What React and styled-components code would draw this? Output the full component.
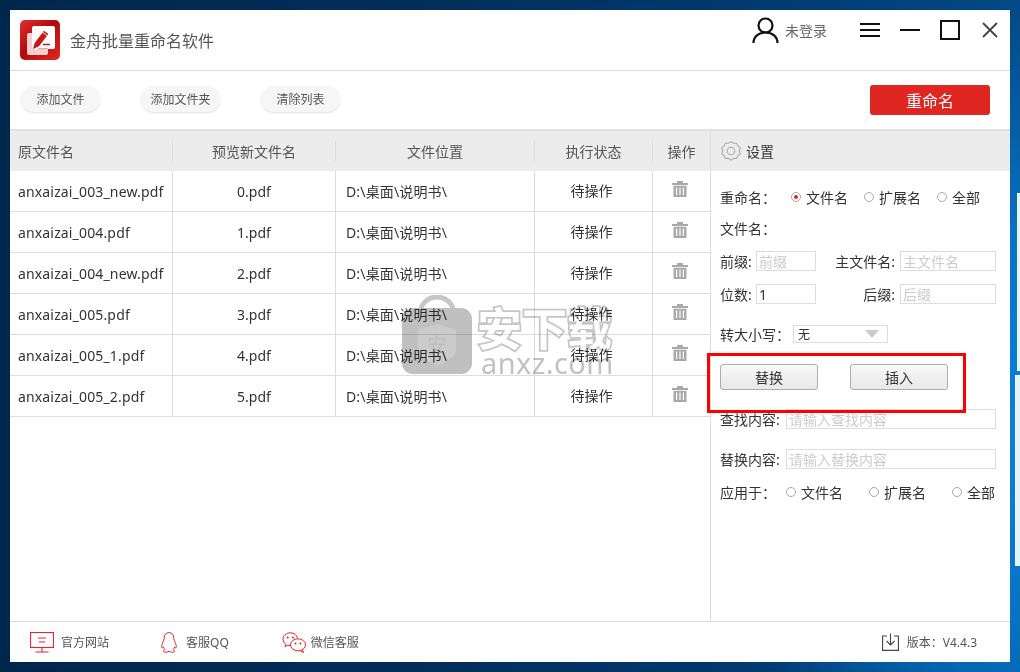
import React from "react";
import styled, { createGlobalStyle } from "styled-components";

const Global = createGlobalStyle`
  html, body { margin: 0; padding: 0; width: 1020px; height: 672px; overflow: hidden; }
  body { font-family: "Noto Sans", "Noto Sans CJK SC", sans-serif; }
  * { box-sizing: border-box; }
`;
const Desktop = styled.div`
  position: relative; width: 1020px; height: 672px; padding: 10px;
  background:
    radial-gradient(ellipse 300px 420px at 1020px 430px, #0a80da 0%, rgba(10,128,218,.75) 45%, rgba(10,128,218,0) 100%),
    linear-gradient(90deg, #01264c 0%, #012e58 40%, #013a70 75%, #024a86 100%);
`;
const BehindPane = styled.div`
  position: absolute; right: 0; top: ${p => p.$top}px; width: ${p => p.$w}px; height: ${p => p.$h}px;
  background: #dff4fb; border: 1px solid #f2fbff; border-right: none;
`;
const Win = styled.div`
  position: relative; width: 1000px; height: 652px; background: #fff; display: flex; flex-direction: column;
  font-size: 14px; color: #333;
`;
const TitleBar = styled.div`
  height: 61px; flex: none; display: flex; align-items: center; padding: 0 10px; border-bottom: 1px solid #ddd;
`;
const Title = styled.div`
  margin-left: 10px; font-size: 16px; color: #555;
`;
const UserBlock = styled.div`
  margin-left: auto; display: flex; align-items: center; gap: 6px; color: #666; font-size: 14px; margin-bottom: 20px;
`;
const WinControls = styled.div`
  display: flex; align-items: center; margin-left: 33px; margin-right: -1px; margin-bottom: 20px;
`;
const Ctrl = styled.svg`
  display: block; flex: none; margin-right: ${p => p.$gap}px;
`;
const Toolbar = styled.div`
  height: 60px; flex: none; display: flex; align-items: center; padding: 0 20px 3px 11px; gap: 41px; border-bottom: 2px solid #e2e2e2;
`;
const PillBtn = styled.div`
  width: 79px; height: 26px; border-radius: 13px; background: #f6f6f6; color: #555; font-size: 12px;
  display: flex; align-items: center; justify-content: center; box-shadow: 0 1px 2px rgba(0,0,0,.12);
`;
const RenameBtn = styled.div`
  margin-left: auto; width: 120px; height: 30px; margin-top: 3px; border-radius: 3px; background: #e02620; color: #fff;
  font-size: 16px; display: flex; align-items: center; justify-content: center;
`;
const Main = styled.div`
  flex: 1; min-height: 0; display: flex;
`;
const TablePane = styled.div`
  width: 700px; flex: none; display: flex; flex-direction: column;
`;
const HeadRow = styled.div`
  height: 40px; flex: none; background: #ececec; display: grid; grid-template-columns: 163px 163px 199px 118px 57px; align-items: center;
  color: #555; font-size: 14px;
`;
const HeadCell = styled.div`
  height: 20px; line-height: 22px; border-right: ${p => p.$last ? "none" : "1px solid #ddd"};
  text-align: ${p => p.$left ? "left" : "center"}; padding-left: ${p => p.$left ? 8 : 0}px;
`;
const Row = styled.div`
  height: 41px; flex: none; display: grid; grid-template-columns: 163px 163px 199px 118px 57px; border-bottom: 1px solid #ddd;
  font-size: 14px; color: #333;
`;
const Cell = styled.div`
  display: flex; align-items: center; justify-content: ${p => p.$left ? "flex-start" : "center"};
  padding-left: ${p => p.$pad || 0}px; padding-bottom: ${p => p.$lift || 0}px; padding-right: ${p => p.$pr || 0}px;
  border-right: ${p => p.$last ? "none" : "1px solid #ddd"};
  white-space: nowrap; letter-spacing: ${p => p.$left ? ".15px" : "0"};
`;
const TrashSlot = styled.div`
  display: flex; margin: 0 4px 4px 0;
`;
const Side = styled.div`
  flex: 1; border-left: 1px solid #ddd; display: flex; flex-direction: column; color: #333; font-size: 14px;
`;
const SideHead = styled.div`
  height: 40px; flex: none; background: #ececec; display: flex; align-items: center; padding-left: 10px; gap: 5px; color: #333;
`;
const SideBody = styled.div`
  padding: 16px 14px 0 9px; display: flex; flex-direction: column;
`;
const Line = styled.div`
  display: flex; align-items: center; height: ${p => p.$h || 20}px; margin-bottom: ${p => p.$mb || 0}px; white-space: nowrap;
`;
const Label = styled.span`
  flex: none; width: ${p => p.$w ? `${p.$w}px` : "auto"}; text-align: ${p => p.$right ? "right" : "left"};
  padding-right: ${p => p.$right ? 5 : 0}px;
`;
const Radio = styled.span`
  flex: none; width: 10px; height: 10px; border-radius: 50%; border: 1px solid #aaa; background: #fff; margin-left: ${p => p.$ml}px; margin-right: 5px;
  display: flex; align-items: center; justify-content: center;
  &::after { content: ""; display: ${p => p.$on ? "block" : "none"}; width: 4px; height: 4px; border-radius: 50%; background: #e02620; }
`;
const Field = styled.div`
  flex: none; width: ${p => p.$w}px; height: 20px; border: 1px solid #ddd; padding-left: 2px;
  display: flex; align-items: center; color: ${p => p.$val ? "#333" : "#ccc"}; font-size: 14px; overflow: hidden; white-space: nowrap;
`;
const SelectBox = styled.div`
  flex: none; width: 95px; height: 18px; border: 1px solid #ddd; margin-left: 3px; padding-left: 4px; display: flex; align-items: center; justify-content: space-between; font-size: 12px;
`;
const Arrow = styled.span`
  width: 0; height: 0; margin-right: 8px; border-left: 7px solid transparent; border-right: 7px solid transparent; border-top: 8px solid #ccc;
`;
const GrayBtn = styled.div`
  width: 98px; height: 26px; border: 1px solid #adadad; border-radius: 3px; background: linear-gradient(#f8f8f8, #e8e8e8);
  display: flex; align-items: center; justify-content: center; font-size: 14px; color: #333; margin-right: ${p => p.$mr || 0}px;
`;
const Footer = styled.div`
  height: 41px; flex: none; border-top: 1px solid #ddd; display: flex; align-items: center; padding: 0 33px 0 20px; font-size: 12px; color: #555;
`;
const FootItem = styled.div`
  display: flex; align-items: center; gap: ${p => p.$gap}px; margin-right: ${p => p.$mr}px;
`;
const Version = styled.div`
  margin-left: auto; display: flex; align-items: center; gap: 8px;
`;
const Highlight = styled.div`
  position: absolute; left: 697px; top: 343px; width: 259px; height: 60px; border: 3px solid #f00; pointer-events: none;
`;
const Watermark = styled.div`
  position: absolute; left: 392px; top: 285px; display: flex; pointer-events: none; mix-blend-mode: multiply;
`;
const WmText = styled.div`
  margin-left: 5px; display: flex; flex-direction: column;
`;
const WmCn = styled.div`
  font-size: 45px; line-height: 48px; font-weight: 700; color: #fff; -webkit-text-stroke: 3.5px #c6c6c6; paint-order: stroke fill;
  white-space: nowrap; margin-top: 10px;
`;
const WmEn = styled.div`
  font-size: 29px; line-height: 30px; color: #c2c2c2; margin-top: -5px; margin-left: 4px; letter-spacing: .4px;
`;

const Logo = () => (
  <svg width="40" height="40" viewBox="0 0 40 40">
    <defs>
      <linearGradient id="lg" x1="0" y1="0" x2="1" y2="1">
        <stop offset="0" stopColor="#e03030" /><stop offset=".45" stopColor="#b30a0e" /><stop offset="1" stopColor="#dc2a22" />
      </linearGradient>
    </defs>
    <rect width="40" height="40" rx="5" fill="url(#lg)" />
    <rect x="7" y="13" width="21" height="22" rx="2" fill="#f3cfcf" />
    <rect x="12" y="6" width="23" height="23" rx="2" fill="#fff" />
    <path d="M13 29l1.600-6L24 10.800l4.400 3.300L19 26.200z" fill="#c8181a" />
    <path d="M22.800 12.400l4.400 3.300" stroke="#fff" strokeWidth="1" />
    <path d="M23 24.500h7" stroke="#c8181a" strokeWidth="1.500" />
    <path d="M18 28.600h10" stroke="#d9a0a0" strokeWidth="1" />
  </svg>
);
const User = () => (
  <svg width="27" height="26" viewBox="0 0 27 26" fill="none" stroke="#111" strokeWidth="2.200">
    <circle cx="13.500" cy="8.500" r="7" />
    <path d="M1.500 26c0-6.500 5-10.500 12-10.500s12 4 12 10.500" />
  </svg>
);
const Trash = () => (
  <svg width="16" height="16" viewBox="0 0 16 16" fill="#a9a9a9">
    <path d="M0 2h16v2H0zM5 0h6v2H5z" />
    <path d="M1.500 4.800h13V16h-13zM4 6.500v7.500h1.200V6.500zM7.400 6.500v7.500h1.200V6.500zM10.800 6.500v7.500H12V6.500z" fillRule="evenodd" />
  </svg>
);
const Gear = () => (
  <svg width="20" height="20" viewBox="0 0 20 20" fill="none" stroke="#aaa" strokeWidth="1.100">
    <path d="M10 .8l2.600 1.500 3-.1 1.300 2.700 2.300 2-.8 3 .8 3-2.300 1.900-1.300 2.700-3-.1L10 19.200l-2.600-1.800-3 .1-1.300-2.700-2.300-1.900.8-3-.8-3 2.300-2 1.300-2.700 3 .1z" />
    <circle cx="10" cy="10" r="3.700" />
  </svg>
);
const Monitor = () => (
  <svg width="24" height="21" viewBox="0 0 24 21" fill="none" stroke="#e2262a" strokeWidth="1.100">
    <rect x=".5" y=".5" width="23" height="15" />
    <path d="M12 16v3.500M5.500 20h13M8 6h8M9 10h6" />
  </svg>
);
const QQ = () => (
  <svg width="16" height="21" viewBox="0 0 16 21" fill="none" stroke="#e2262a" strokeWidth="1">
    <path d="M8 .6c-3 0-4.700 2.200-4.700 5 0 1-.1 1.800-.5 2.600C1.700 10.400.6 13 .7 15c.1 1.200.8 1 1.800 0 .2 1 .7 2 1.500 2.600-1 .5-1.800 1.200-1.500 2 .4.900 3.800.9 5.500-.4 1.700 1.300 5.100 1.300 5.500.4.300-.8-.5-1.500-1.500-2 .8-.6 1.300-1.600 1.500-2.600 1 1 1.700 1.200 1.800 0 .1-2-1-4.600-2.100-6.800-.4-.8-.5-1.600-.5-2.600 0-2.800-1.700-5-4.700-5z" />
  </svg>
);
const WeChat = () => (
  <svg width="24" height="21" viewBox="0 0 24 21" fill="none" stroke="#e2262a" strokeWidth="1">
    <path d="M15.500 6C14.800 3 12 .8 8.500.8 4.300.8 1 3.600 1 7.200c0 2 1.100 3.800 2.800 5L3 14.600l2.800-1.400c.8.200 1.600.3 2.500.3" />
    <ellipse cx="16" cy="12.800" rx="7.500" ry="6" />
    <path d="M20.500 18l1 2.500-3.200-1.500" />
    <circle cx="5.800" cy="5.500" r="1" fill="#e2262a" stroke="none" /><circle cx="11" cy="5.500" r="1" fill="#e2262a" stroke="none" />
    <circle cx="13.500" cy="11.500" r="1" fill="#e2262a" stroke="none" /><circle cx="18.500" cy="11.500" r="1" fill="#e2262a" stroke="none" />
  </svg>
);
const Download = () => (
  <svg width="17" height="18" viewBox="0 0 17 18" fill="none" stroke="#444" strokeWidth="1.100">
    <path d="M5 3H.6v14.400h15.800V3H12M8.500 .5v11M4.500 8l4 4 4-4" />
  </svg>
);
const Lock = () => (
  <svg width="70" height="80" viewBox="0 0 70 80" style={{ flex: "none" }}>
    <path d="M18 20c0-24 34-24 34 0" fill="none" stroke="#c6c6c6" strokeWidth="5" />
    <rect x="0" y="13" width="70" height="66" rx="11" fill="#c0c0c0" />
    <path d="M35 29l19 6v19c0 8-10 13-19 17-9-4-19-9-19-17V35z" fill="#cbcbcb" />
    <text x="35" y="58" textAnchor="middle" fontSize="20" fill="#bdbdbd" fontFamily="Noto Sans CJK SC, sans-serif">安</text>
  </svg>
);

const rows = [
  ["anxaizai_003_new.pdf", "0.pdf"],
  ["anxaizai_004.pdf", "1.pdf"],
  ["anxaizai_004_new.pdf", "2.pdf"],
  ["anxaizai_005.pdf", "3.pdf"],
  ["anxaizai_005_1.pdf", "4.pdf"],
  ["anxaizai_005_2.pdf", "5.pdf"],
];

export default function App() {
  return (
    <Desktop>
      <Global />
      <BehindPane $top={193} $w={3} $h={178} />
      <BehindPane $top={375} $w={5} $h={191} />
      <Win>
        <TitleBar>
          <Logo />
          <Title>金舟批量重命名软件</Title>
          <UserBlock><User />未登录</UserBlock>
          <WinControls>
            <Ctrl $gap={20} width="20" height="14" viewBox="0 0 20 14" stroke="#111" strokeWidth="2"><path d="M0 1h20M0 7h20M0 13h20" /></Ctrl>
            <Ctrl $gap={20} width="20" height="2" viewBox="0 0 20 2" stroke="#111" strokeWidth="2"><path d="M0 1h20" /></Ctrl>
            <Ctrl $gap={22} width="20" height="20" viewBox="0 0 20 20" fill="none" stroke="#111" strokeWidth="2"><rect x="1" y="1" width="18" height="18" /></Ctrl>
            <Ctrl $gap={3} width="16" height="16" viewBox="0 0 16 16" stroke="#444" strokeWidth="1.800"><path d="M1 1l14 14M15 1L1 15" /></Ctrl>
          </WinControls>
        </TitleBar>
        <Toolbar>
          <PillBtn>添加文件</PillBtn>
          <PillBtn>添加文件夹</PillBtn>
          <PillBtn>清除列表</PillBtn>
          <RenameBtn>重命名</RenameBtn>
        </Toolbar>
        <Main>
          <TablePane>
            <HeadRow>
              <HeadCell $left>原文件名</HeadCell>
              <HeadCell>预览新文件名</HeadCell>
              <HeadCell>文件位置</HeadCell>
              <HeadCell>执行状态</HeadCell>
              <HeadCell $last>操作</HeadCell>
            </HeadRow>
            {rows.map(([a, b]) => (
              <Row key={a}>
                <Cell $left $pad={8}>{a}</Cell>
                <Cell>{b}</Cell>
                <Cell $left $pad={10} $lift={1}>D:\桌面\说明书\</Cell>
                <Cell $lift={3} $pr={4}>待操作</Cell>
                <Cell $last><TrashSlot><Trash /></TrashSlot></Cell>
              </Row>
            ))}
          </TablePane>
          <Side>
            <SideHead><Gear />设置</SideHead>
            <SideBody>
              <Line $mb={11}>
                <Label $w={71}>重命名：</Label>
                <Radio $ml={0} $on />文件名
                <Radio $ml={16} />扩展名
                <Radio $ml={16} />全部
              </Line>
              <Line $mb={13}><Label>文件名：</Label></Line>
              <Line $mb={13}>
                <Label $w={36}>前缀:</Label>
                <Field $w={60}>前缀</Field>
                <Label $w={84} $right>主文件名:</Label>
                <Field $w={96}>主文件名</Field>
              </Line>
              <Line $mb={20}>
                <Label $w={36}>位数:</Label>
                <Field $w={60} $val>1</Field>
                <Label $w={84} $right>后缀:</Label>
                <Field $w={96}>后缀</Field>
              </Line>
              <Line $mb={20}>
                <Label $w={70}>转大小写：</Label>
                <SelectBox>无<Arrow /></SelectBox>
              </Line>
              <Line $h={26} $mb={19}>
                <GrayBtn $mr={32}>替换</GrayBtn>
                <GrayBtn>插入</GrayBtn>
              </Line>
              <Line $mb={20}>
                <Label $w={66}>查找内容:</Label>
                <Field $w={210}>请输入查找内容</Field>
              </Line>
              <Line $mb={13}>
                <Label $w={66}>替换内容:</Label>
                <Field $w={210}>请输入替换内容</Field>
              </Line>
              <Line>
                <Label $w={66}>应用于：</Label>
                <Radio $ml={0} />文件名
                <Radio $ml={26} />扩展名
                <Radio $ml={26} />全部
              </Line>
            </SideBody>
          </Side>
        </Main>
        <Footer>
          <FootItem $gap={7} $mr={52}><Monitor />官方网站</FootItem>
          <FootItem $gap={9} $mr={53}><QQ />客服QQ</FootItem>
          <FootItem $gap={5} $mr={0}><WeChat />微信客服</FootItem>
          <Version><Download />版本：V4.4.3</Version>
        </Footer>
        <Watermark>
          <Lock />
          <WmText>
            <WmCn>安下载</WmCn>
            <WmEn>anxz.com</WmEn>
          </WmText>
        </Watermark>
        <Highlight />
      </Win>
    </Desktop>
  );
}
